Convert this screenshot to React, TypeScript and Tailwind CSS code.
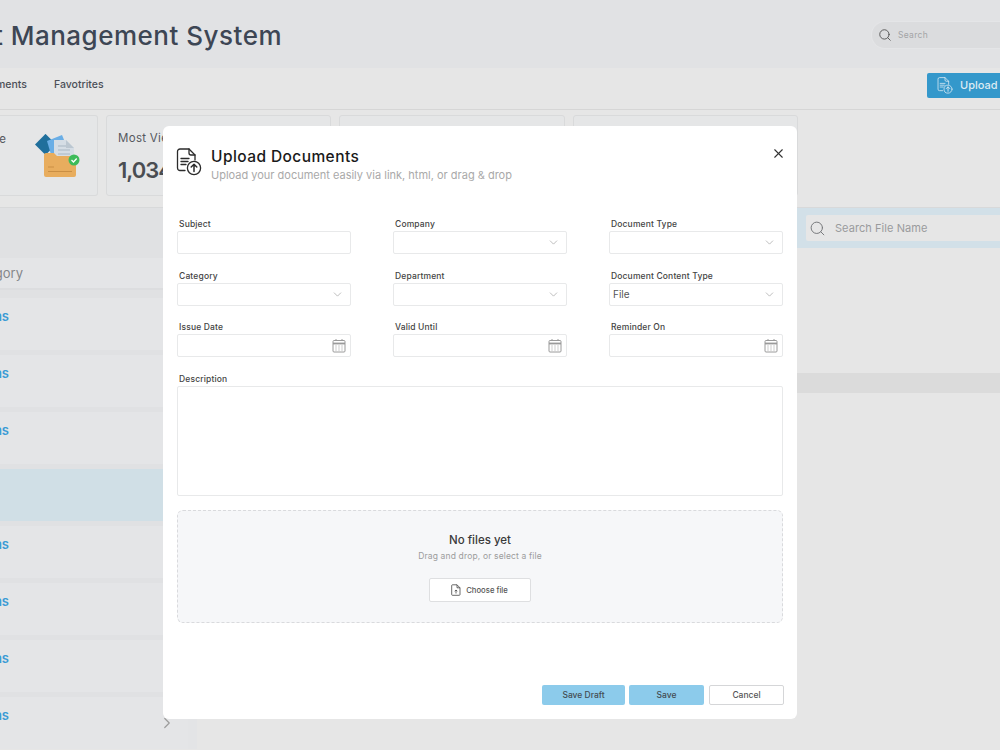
import { ChevronDown, ChevronRight, Search, X } from "lucide-react";

const DocUploadIcon = ({ className }: { className?: string }) => (
  <svg viewBox="0 0 26 28" fill="none" stroke="currentColor" strokeWidth="1.3" strokeLinecap="round" strokeLinejoin="round" className={className}>
    <path d="M9 22.5H4a2.5 2.5 0 0 1-2.5-2.5V3.5A2.5 2.5 0 0 1 4 1h9l6 6v5" />
    <path d="M13 1v4a2 2 0 0 0 2 2h4" />
    <path d="M5 10.5h8M5 13.5h7M5 16.5h5" />
    <circle cx="18" cy="20" r="6.6" />
    <path d="M18 23.5v-7M15.2 19l2.8-2.8 2.8 2.8" strokeWidth="1.5" />
  </svg>
);

const CalendarIcon = () => (
  <svg viewBox="0 0 14 15" fill="none" stroke="#9a9a9a" strokeWidth="1" className="h-[15px] w-[14px]">
    <rect x="1" y="2.5" width="12" height="11.5" rx="1" />
    <path d="M1 5.5h12" strokeWidth="1.8" />
    <path d="M4 1v2M10 1v2" />
    <path d="M3.5 8h1M6.5 8h1M9.5 8h1M3.5 10h1M6.5 10h1M9.5 10h1M3.5 12h1M6.5 12h1M9.5 12h1" />
  </svg>
);

const FolderArt = () => (
  <svg viewBox="0 0 46 44" className="h-[44px] w-[46px]">
    <rect x="3" y="3" width="15" height="15" transform="rotate(45 10.500 10.500)" fill="#1f6f9c" />
    <path d="M12 7 27 1l7 17-17 6z" fill="#6aaee6" />
    <path d="M19 6h12l8 8v14H19z" fill="#d5dde5" />
    <path d="M31 6v8h8" fill="#bcc7d1" />
    <path d="M23 12h8M23 16h12M23 20h12M23 24h12" stroke="#a9b7c4" strokeWidth="1.2" />
    <path d="M9 21a2 2 0 0 1 2-2h8l3 3h17a2 2 0 0 1 2 2v17a2 2 0 0 1-2 2H11a2 2 0 0 1-2-2z" fill="#e8ad5e" />
    <path d="M13 33h6M13 37.500h24" stroke="#c98f45" strokeWidth="1.2" />
    <circle cx="39" cy="26" r="5.500" fill="#3dbb5a" />
    <path d="m36.500 26 2 2 3.200-3.500" fill="none" stroke="#fff" strokeWidth="1.300" />
  </svg>
);

const Field = ({ label, kind, value }: { label: string; kind?: "select" | "date"; value?: string }) => (
  <div>
    <div className="h-[15px] pl-[2px] text-[8.500px] leading-[16px] font-medium tracking-[0.15px] whitespace-nowrap text-[#444]">{label}</div>
    <div className="flex h-[23px] items-center justify-between rounded-[2px] border border-[#e8e9ea] bg-white pr-[4px] pl-[3px] text-[10px] text-[#555]">
      <span>{value}</span>
      {kind === "select" && <ChevronDown className="mr-[2px] h-[13px] w-[13px] text-[#9a9a9a]" strokeWidth={1.2} />}
      {kind === "date" && <CalendarIcon />}
    </div>
  </div>
);

const categoryRows = ["Visas", "Visas", "Visas", "", "Visas", "Visas", "Visas", "Visas"];

export default function App() {
  return (
    <div className="relative h-[750px] w-[1000px] overflow-hidden bg-[#e6e6e6] font-['Inter','Liberation_Sans',sans-serif]">
      {/* Header */}
      <header className="flex h-[68px] items-center justify-between bg-[#e1e2e4]">
        <div className="mt-[3px] flex w-[282px] justify-end whitespace-nowrap text-[26px] font-medium tracking-[0.5px] text-[#3d4654]">
          Document Management System
        </div>
        <div className="mt-[2px] flex h-[26px] w-[128px] items-center gap-[6px] rounded-l-full bg-[#dbdcde] pl-[6px] ring-1 ring-[#e4e5e7]">
          <Search className="h-[14px] w-[14px] text-[#555]" strokeWidth={1.6} />
          <span className="text-[8.5px] tracking-[0.3px] text-[#a3a4a6]">Search</span>
        </div>
      </header>

      {/* Tabs */}
      <nav className="flex h-[42px] items-start border-b border-[#d6d6d6]">
        <div className="mt-[11px] flex h-[12px] items-center gap-[27px] text-[10.500px] font-medium text-[#4b4f57]">
          <div className="flex w-[27px] justify-end whitespace-nowrap">Documents</div>
          <div>Favotrites</div>
        </div>
        <button className="mt-[5px] ml-auto flex h-[25px] w-[73px] items-center gap-[7px] rounded-l-[2px] bg-[#3498cb] pl-[10px] text-[11px] font-medium whitespace-nowrap text-[#dcebf3]">
          <DocUploadIcon className="h-[17px] w-[16px] shrink-0" />
          Upload
        </button>
      </nav>

      {/* Stat cards */}
      <section className="flex h-[98px] gap-2 border-b border-[#d8d9da] pt-[5px]">
        <div className="flex h-[81px] w-[98px] rounded-r-[3px] border-y border-r border-[#d9dadb] bg-[#e5e6e7]">
          <div className="mt-[15px] flex h-[14px] w-[6px] justify-end text-[11.500px] whitespace-nowrap text-[#55585e]">Storage</div>
          <div className="mt-[18px] ml-[29px]">
            <FolderArt />
          </div>
        </div>
        <div className="h-[81px] w-[225px] rounded-[3px] border border-[#d9dadb] bg-[#e5e6e7] pt-[14px] pl-[11px]">
          <div className="text-[11.500px] tracking-[0.3px] whitespace-nowrap text-[#55585e]">Most Viewed</div>
          <div className="mt-[7px] text-[22px] font-semibold tracking-[-1px] text-[#4a4d52]">1,034</div>
        </div>
        <div className="h-[81px] w-[226px] rounded-[3px] border border-[#d9dadb] bg-[#e5e6e7]" />
        <div className="h-[81px] w-[225px] rounded-[3px] border border-[#d9dadb] bg-[#e5e6e7]" />
      </section>

      {/* Category list and file area */}
      <main className="flex">
        <aside className="w-[197px] shrink-0 bg-[#e3e4e6]">
          <div className="h-[50px] bg-[#e0e1e3]" />
          <div className="flex h-[32px] items-center border-b-[2px] border-[#dcdddf] bg-[#e4e5e7] pt-[2px]">
            <div className="flex w-[23px] justify-end text-[13px] whitespace-nowrap text-[#85878a]">Category</div>
          </div>
          <div className="flex w-[188px] flex-col gap-[5px] bg-[#e0e1e3] pt-[8px]">
            {categoryRows.map((name, i) => (
              <div key={i} className={`flex h-[52px] ${name ? "bg-[#e4e5e7]" : "bg-[#d0dfe6]"}`}>
                {name && <div className="mt-[9px] flex h-[16px] w-[9px] justify-end text-[13px] font-semibold whitespace-nowrap text-[#3a9bd5]">{name}</div>}
                {i === categoryRows.length - 1 && <ChevronRight className="mt-[17px] ml-auto mr-[12px] h-[18px] w-[18px] text-[#9c9c9c]" strokeWidth={1.6} />}
              </div>
            ))}
          </div>
        </aside>
        <div className="flex-1">
          <div className="flex h-[40px] items-center justify-end bg-[#d2e0e8]">
            <div className="flex h-[26px] w-[194px] items-center gap-[9px] rounded-l-[2px] bg-[#e6e6e6] pl-[3px]">
              <Search className="h-[17px] w-[17px] text-[#77797c]" strokeWidth={1.4} />
              <span className="text-[11px] tracking-[0.06px] text-[#9a9b9d]">Search File Name</span>
            </div>
          </div>
          <div className="mt-[125px] h-[20px] bg-[#dbdbdb]" />
        </div>
      </main>

      {/* Upload dialog */}
      <div className="absolute top-[126px] left-[163px] flex h-[593px] w-[634px] flex-col rounded-[6px] bg-white px-[14px] pb-[14px]">
        <div className="flex items-start pt-[22px]">
          <DocUploadIcon className="-ml-[1px] h-[28px] w-[26px] shrink-0 text-[#2b2b2b]" />
          <div className="ml-[9px] flex-1">
            <div className="mt-[-1px] text-[15.500px] leading-[20px] font-medium tracking-[0.42px] text-[#1a1a1a]">Upload Documents</div>
            <div className="mt-[1px] text-[11px] leading-[15px] text-[#a9a9a9]">Upload your document easily via link, html, or drag &amp; drop</div>
          </div>
          <X className="-mt-[2px] mr-[-3px] h-[15px] w-[15px] text-[#333]" strokeWidth={1.8} />
        </div>

        <div className="mt-[33px] grid grid-cols-[174px_174px_174px] gap-x-[42px] gap-y-[13.500px]">
          <Field label="Subject" />
          <Field label="Company" kind="select" />
          <Field label="Document Type" kind="select" />
          <Field label="Category" kind="select" />
          <Field label="Department" kind="select" />
          <Field label="Document Content Type" kind="select" value="File" />
          <Field label="Issue Date" kind="date" />
          <Field label="Valid Until" kind="date" />
          <Field label="Reminder On" kind="date" />
        </div>

        <div className="mt-[13.500px] h-[15px] pl-[2px] text-[8.500px] leading-[16px] font-medium tracking-[0.15px] text-[#444]">Description</div>
        <div className="h-[110px] rounded-[2px] border border-[#e8e9ea]" />

        <div className="mt-[14px] flex h-[113px] flex-col items-center rounded-[6px] border border-dashed border-[#d9dadd] bg-[#f6f7f9] pt-[21px]">
          <div className="text-[11.500px] leading-[16px] font-medium text-[#3a3a3a]">No files yet</div>
          <div className="mt-[2px] text-[8.500px] leading-[12px] tracking-[0.15px] text-[#9c9c9c]">Drag and drop, or select a file</div>
          <button className="mt-[16px] flex h-[24px] w-[102px] items-center justify-center gap-[5px] rounded-[2px] border border-[#dedfe1] bg-white pr-[1px] text-[7.700px] font-medium text-[#555]">
            <svg viewBox="0 0 10 12" fill="none" stroke="#444" strokeWidth="0.8" className="h-[12px] w-[10px]">
              <path d="M1.500.800h4.500l3 3v6.700a.8.8 0 0 1-.8.8H1.500a.8.8 0 0 1-.8-.8V1.600a.8.8 0 0 1 .8-.8z" />
              <path d="M6 .800v3h3M5 9.500v-3.500M3.700 7.200 5 6l1.300 1.200" />
            </svg>
            <span className="pt-[2px]">Choose file</span>
          </button>
        </div>

        <div className="mt-auto mr-[-1px] flex justify-end gap-[4px] text-[8.500px] font-medium text-[#444b52]">
          <button className="h-[20px] w-[83px] rounded-[2px] bg-[#8ccbeb]">Save Draft</button>
          <button className="h-[20px] w-[75px] rounded-[2px] bg-[#8ccbeb]">Save</button>
          <button className="ml-[1px] h-[20px] w-[75px] rounded-[2px] border border-[#d5d6d8] bg-white text-[#555]">Cancel</button>
        </div>
      </div>
    </div>
  );
}
